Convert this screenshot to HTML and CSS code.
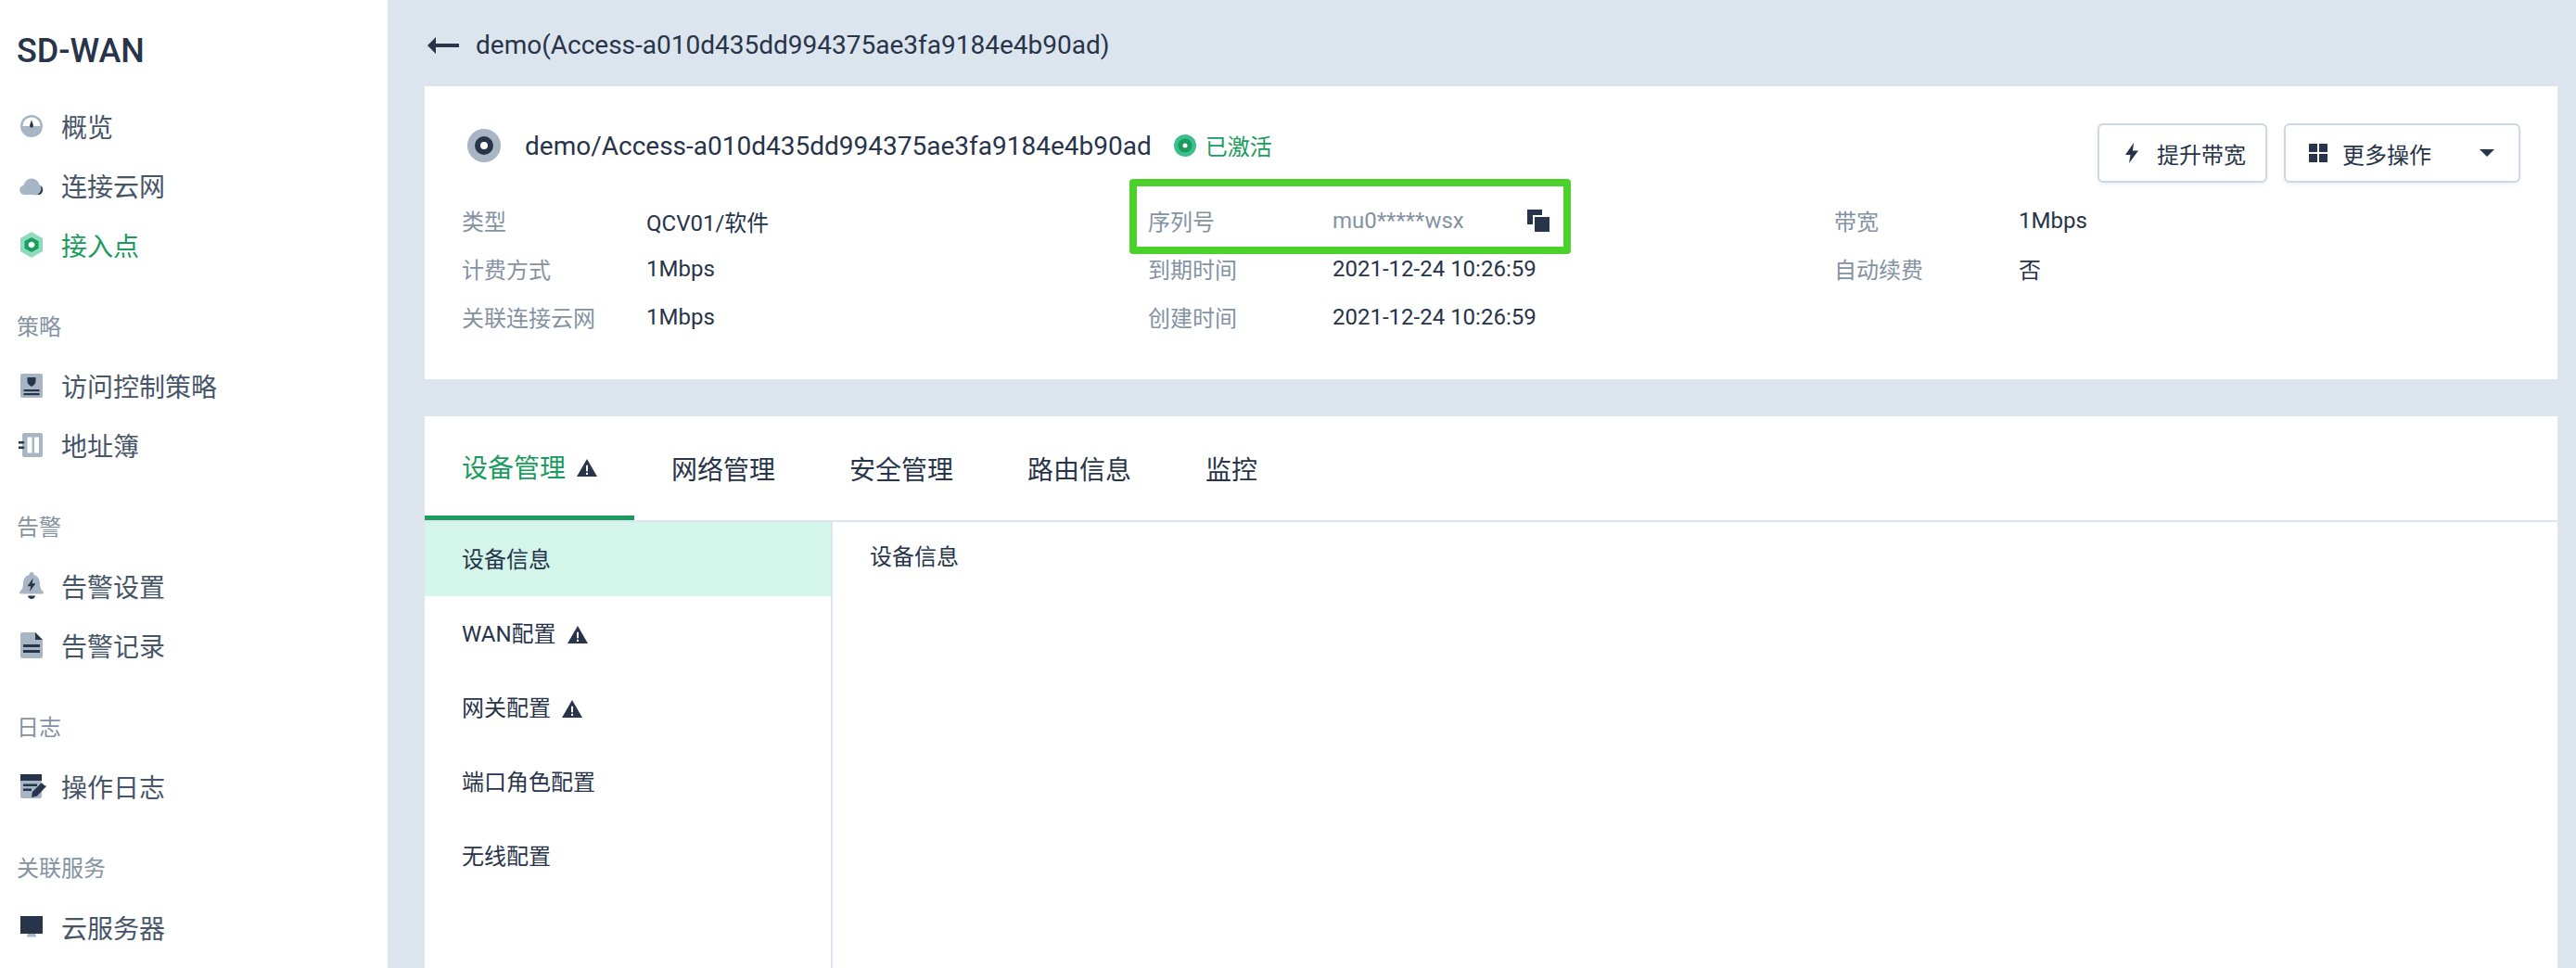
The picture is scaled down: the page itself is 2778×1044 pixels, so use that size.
FILE: index.html
```html
<!DOCTYPE html>
<html>
<head>
  <meta charset="UTF-8">
  <link rel="stylesheet" href="styles.css">
  <title>SD-WAN</title>
</head>
<body>
  <aside class="sidebar">
    <div class="logo">SD-WAN</div>
    <div class="nav-group">
      <a class="nav-item">
        <svg class="nav-icon" viewBox="0 0 28 28"><circle cx="14" cy="14" r="12" fill="#a7b5c4"/><path d="M4.400 14a9.600 9.600 0 0 1 19.200 0z" fill="#fff"/><path d="M14 7.500c.8 2.600 1.900 4.600 1.900 6.200a1.900 1.900 0 0 1-3.800 0c0-1.600 1.100-3.600 1.900-6.200z" fill="#27344a"/></svg>
        <span>概览</span>
      </a>
      <a class="nav-item">
        <svg class="nav-icon" viewBox="0 0 28 28"><path d="M6 24a5 5 0 0 1-.6-9.900C6.500 9.500 10 6.500 14 6.500c4.300 0 7.700 2.900 8.600 7.100A5.300 5.300 0 0 1 21 24z" fill="#a7b5c4"/><path d="M23.500 14.500a5.200 5.200 0 0 1-1.500 9.500h-5.500a6.500 6.500 0 0 0 7-9.500z" fill="#27344a"/></svg>
        <span>连接云网</span>
      </a>
      <a class="nav-item active">
        <svg class="nav-icon" viewBox="0 0 28 28"><path d="M14 0l12 7v14l-12 7-12-7V7z" fill="#8edcbc"/><path d="M14 6l7.500 4v8L14 22l-7.500-4v-8z" fill="#1a9c5e"/><path d="M14 10.500l3.300 1.800v3.400L14 17.500l-3.300-1.800v-3.400z" fill="#fff"/></svg>
        <span>接入点</span>
      </a>
    </div>

    <div class="nav-group">
      <div class="nav-title">策略</div>
      <a class="nav-item">
        <svg class="nav-icon" viewBox="0 0 28 28"><rect x="2" y="1" width="24" height="26" rx="2" fill="#a7b5c4"/><path d="M9.500 5h9v4.500c0 2.500-2.500 4.500-4.500 5.500-2-1-4.500-3-4.500-5.500z" fill="#27344a"/><rect x="5.500" y="18" width="17" height="2.200" fill="#27344a"/><rect x="5.500" y="22" width="17" height="2.200" fill="#27344a"/></svg>
        <span>访问控制策略</span>
      </a>
      <a class="nav-item">
        <svg class="nav-icon" viewBox="0 0 28 28"><rect x="4" y="1" width="22" height="26" rx="2" fill="#a7b5c4"/><rect x="9.500" y="5.500" width="5" height="17" fill="#fff"/><rect x="17" y="5.500" width="5" height="17" fill="#fff"/><rect x="0" y="10" width="6" height="2.500" fill="#27344a"/><rect x="0" y="15.500" width="6" height="2.500" fill="#27344a"/></svg>
        <span>地址簿</span>
      </a>
    </div>

    <div class="nav-group">
      <div class="nav-title">告警</div>
      <a class="nav-item">
        <svg class="nav-icon bell-icon" viewBox="0 0 28 30"><path d="M14 0a2.500 2.500 0 0 1 2.500 3C21 4.200 23 8 23 12.500c0 4 1.200 6.500 3.500 8.500 1 .9.500 2.500-1 2.500h-23c-1.500 0-2-1.600-1-2.500C3.800 19 5 16.500 5 12.500 5 8 7 4.200 11.500 3A2.500 2.500 0 0 1 14 0z" fill="#a7b5c4"/><path d="M15.800 6.500l-6.300 8.800h3.700l-1.200 5.700 6.400-8.800h-3.800z" fill="#27344a"/><path d="M10 25.500h8c-.4 2.200-2 3.500-4 3.500s-3.600-1.300-4-3.500z" fill="#27344a"/></svg>
        <span>告警设置</span>
      </a>
      <a class="nav-item">
        <svg class="nav-icon" viewBox="0 0 28 28"><path d="M4 0h14l8 8v18a2 2 0 0 1-2 2H4a2 2 0 0 1-2-2V2a2 2 0 0 1 2-2z" fill="#a7b5c4"/><path d="M18 0l8 8h-8z" fill="#27344a"/><rect x="5" y="13" width="18" height="3" fill="#27344a"/><rect x="5" y="19" width="18" height="3" fill="#27344a"/></svg>
        <span>告警记录</span>
      </a>
    </div>

    <div class="nav-group">
      <div class="nav-title">日志</div>
      <a class="nav-item">
        <svg class="nav-icon log-icon" viewBox="-2 -2 30 30"><path d="M0 7h23v17a2 2 0 0 1-2 2H2a2 2 0 0 1-2-2z" fill="#a7b5c4"/><rect width="23" height="7" fill="#27344a"/><rect x="3" y="10.500" width="15" height="2.500" fill="#27344a"/><rect x="3" y="15.500" width="9" height="2.500" fill="#27344a"/><path d="M12 25l1-6 10-10 5 4-10 10.500z" fill="#27344a"/><path d="M22 8.500l1.500-1.500 4.500 4-1.500 1.500z" fill="#fff"/></svg>
        <span>操作日志</span>
      </a>
    </div>

    <div class="nav-group">
      <div class="nav-title">关联服务</div>
      <a class="nav-item">
        <svg class="nav-icon" viewBox="0 0 28 28"><rect x="2" y="2" width="24" height="19" fill="#27344a"/><path d="M10 21h8l1 3.500H9z" fill="#a7b5c4"/></svg>
        <span>云服务器</span>
      </a>
    </div>
  </aside>

  <main class="main">
    <div class="page-head">
      <svg class="back-icon" viewBox="0 0 34 18"><path d="M9 0v7h25v4H9v7L0 9z" fill="#27344a"/></svg>
      <span>demo(Access-a010d435dd994375ae3fa9184e4b90ad)</span>
    </div>

    <section class="card info-card">
      <div class="info-head">
        <div class="info-title">
          <svg class="device-icon" viewBox="0 0 36 36"><circle cx="18" cy="18" r="18" fill="#a7b5c4"/><circle cx="18" cy="18" r="10" fill="#27344a"/><circle cx="18" cy="18" r="4" fill="#fff"/></svg>
          <span class="device-name">demo/Access-a010d435dd994375ae3fa9184e4b90ad</span>
          <svg class="status-icon" viewBox="0 0 24 24"><circle cx="12" cy="12" r="12" fill="#3cbf8e"/><circle cx="12" cy="12" r="7.500" fill="#1a9c5e"/><circle cx="12" cy="12" r="2.500" fill="#fff"/></svg>
          <span class="status-text">已激活</span>
        </div>
        <div class="actions">
          <button class="btn btn-up">
            <svg class="btn-icon-bolt" viewBox="0 0 14 22"><path d="M9 0L0 13h5.500L4 22l10-13.500H8z" fill="#27344a"/></svg>
            提升带宽
          </button>
          <button class="btn btn-more">
            <svg class="btn-icon-grid" viewBox="0 0 20 20"><path d="M0 0h9v9H0zM11 0h9v9h-9zM0 11h9v9H0zM11 11h9v9h-9z" fill="#27344a"/></svg>
            更多操作
            <svg class="btn-caret" viewBox="0 0 16 8"><path d="M0 0h16L8 8z" fill="#27344a"/></svg>
          </button>
        </div>
      </div>

      <div class="info-grid">
        <div class="info-item"><label>类型</label><span>QCV01/软件</span></div>
        <div class="info-item serial">
          <label>序列号</label><span class="muted">mu0*****wsx</span>
          <svg class="copy-icon" viewBox="0 0 24 24"><path d="M0 0h16v6H6v10H0z" fill="#27344a"/><rect x="8" y="8" width="16" height="16" fill="#27344a"/></svg>
          <div class="highlight"></div>
        </div>
        <div class="info-item"><label>带宽</label><span>1Mbps</span></div>
        <div class="info-item"><label>计费方式</label><span>1Mbps</span></div>
        <div class="info-item"><label>到期时间</label><span>2021-12-24 10:26:59</span></div>
        <div class="info-item"><label>自动续费</label><span class="cjk-value">否</span></div>
        <div class="info-item"><label>关联连接云网</label><span>1Mbps</span></div>
        <div class="info-item"><label>创建时间</label><span>2021-12-24 10:26:59</span></div>
      </div>
    </section>

    <section class="card tabs-card">
      <div class="tabs">
        <div class="tab active">设备管理
          <svg class="warn" viewBox="0 0 22 20" preserveAspectRatio="none"><path d="M11 0l11 20H0z" fill="#27344a"/><path d="M10 7h2v7h-2zM10 15.500h2V18h-2z" fill="#fff"/></svg>
        </div>
        <div class="tab">网络管理</div>
        <div class="tab">安全管理</div>
        <div class="tab">路由信息</div>
        <div class="tab">监控</div>
      </div>
      <div class="tab-body">
        <div class="sub-nav">
          <div class="sub-item active">设备信息</div>
          <div class="sub-item">WAN配置
            <svg class="warn" viewBox="0 0 22 20" preserveAspectRatio="none"><path d="M11 0l11 20H0z" fill="#27344a"/><path d="M10 7h2v7h-2zM10 15.500h2V18h-2z" fill="#fff"/></svg>
          </div>
          <div class="sub-item">网关配置
            <svg class="warn" viewBox="0 0 22 20" preserveAspectRatio="none"><path d="M11 0l11 20H0z" fill="#27344a"/><path d="M10 7h2v7h-2zM10 15.500h2V18h-2z" fill="#fff"/></svg>
          </div>
          <div class="sub-item">端口角色配置</div>
          <div class="sub-item">无线配置</div>
        </div>
        <div class="sub-content">设备信息</div>
      </div>
    </section>
  </main>
</body>
</html>
```

FILE: styles.css
```css
* {
  margin: 0;
  padding: 0;
  box-sizing: border-box;
}

body {
  display: flex;
  width: 100%;
  height: 100vh;
  overflow: hidden;
  background: #dce5ed;
  color: #27344a;
  font-family: Roboto, "Noto Sans CJK SC", sans-serif;
  font-size: 24px;
}

.sidebar {
  flex: 0 0 418px;
  height: 100%;
  overflow: hidden;
  background: #fff;
}

.logo {
  height: 104px;
  padding: 33px 0 0 18px;
  font-size: 36px;
  line-height: 44px;
  font-weight: 500;
}

.nav-group {
  margin-bottom: 24px;
}

.nav-item,
.nav-title {
  display: flex;
  align-items: center;
  height: 64px;
}

.nav-item {
  padding-left: 20px;
  font-size: 28px;
  color: #475569;
}

.nav-item.active {
  color: #1a9c5e;
}

.nav-title {
  padding: 0 0 3px 18px;
  color: #8492a2;
}

.nav-icon {
  flex: none;
  width: 28px;
  height: 28px;
  margin-right: 18px;
}

.bell-icon {
  height: 30px;
}

.log-icon {
  width: 30px;
  height: 30px;
  margin-right: 16px;
}

.main {
  flex: 1;
  min-width: 0;
  height: 100%;
  overflow: hidden;
  padding: 0 20px 0 40px;
}

.page-head {
  display: flex;
  align-items: center;
  height: 93px;
  padding: 4px 0 0 3px;
  font-size: 28px;
}

.back-icon {
  width: 34px;
  height: 18px;
  margin-right: 18px;
}

.card {
  background: #fff;
}

.info-card {
  height: 316px;
  margin-bottom: 40px;
  padding: 40px 40px 0;
}

.info-head {
  display: flex;
  justify-content: space-between;
  height: 79px;
}

.info-title {
  display: flex;
  align-items: center;
  height: 48px;
  padding-left: 6px;
}

.device-icon {
  width: 36px;
  height: 36px;
  margin-right: 26px;
}

.device-name {
  font-size: 28px;
}

.status-icon {
  width: 24px;
  height: 24px;
  margin: 0 10px 0 24px;
}

.status-text {
  padding-bottom: 2px;
  color: #1a9c5e;
}

.actions {
  display: flex;
  gap: 18px;
}

.btn {
  display: flex;
  align-items: center;
  height: 64px;
  background: #fff;
  border: 2px solid #ccd8e4;
  border-radius: 6px;
  box-shadow: 0 2px 4px rgba(39, 52, 74, 0.08);
  color: #27344a;
  font: inherit;
}

.btn-up {
  width: 183px;
  padding-left: 28px;
}

.btn-more {
  width: 255px;
  padding-left: 25px;
}

.btn-icon-bolt {
  width: 14px;
  height: 22px;
  margin-right: 20px;
}

.btn-icon-grid {
  width: 20px;
  height: 20px;
  margin-right: 16px;
}

.btn-caret {
  width: 16px;
  height: 8px;
  margin-left: 52px;
}

.info-grid {
  display: grid;
  grid-template-columns: repeat(3, 740px);
  grid-auto-rows: 52px;
}

.info-item {
  position: relative;
  display: flex;
  align-items: center;
}

.info-item label {
  flex: 0 0 199px;
  padding-bottom: 2px;
  color: #8492a2;
}

.info-item .cjk-value {
  padding-bottom: 2px;
}

.info-item .muted {
  color: #8492a2;
}

.copy-icon {
  position: absolute;
  left: 409px;
  top: 14px;
  width: 24px;
  height: 24px;
}

/* annotation box drawn over the serial number row */
.highlight {
  position: absolute;
  left: -20px;
  top: -19px;
  width: 476px;
  height: 81px;
  border: 8px solid #4cd02c;
  border-radius: 4px;
}

.tabs {
  display: flex;
  height: 114px;
  border-bottom: 2px solid #dce5ed;
}

.tab {
  display: flex;
  align-items: center;
  gap: 12px;
  height: 112px;
  padding: 0 40px;
  font-size: 28px;
}

.tab:first-child {
  border-bottom: 5px solid #1a9c5e;
}

.tab.active {
  color: #1a9c5e;
}

.warn {
  flex: none;
  width: 22px;
  height: 19px;
  margin-top: 4px;
}

.tab-body {
  display: flex;
  height: 600px;
}

.sub-nav {
  flex: 0 0 440px;
  border-right: 2px solid #dce5ed;
}

.sub-item {
  display: flex;
  align-items: center;
  gap: 12px;
  height: 80px;
  padding: 0 0 3px 40px;
}

.sub-item .warn {
  margin-top: 6px;
}

.sub-item.active {
  background: #d4f5e9;
}

.sub-content {
  padding: 0 40px;
  line-height: 77px;
}
```
